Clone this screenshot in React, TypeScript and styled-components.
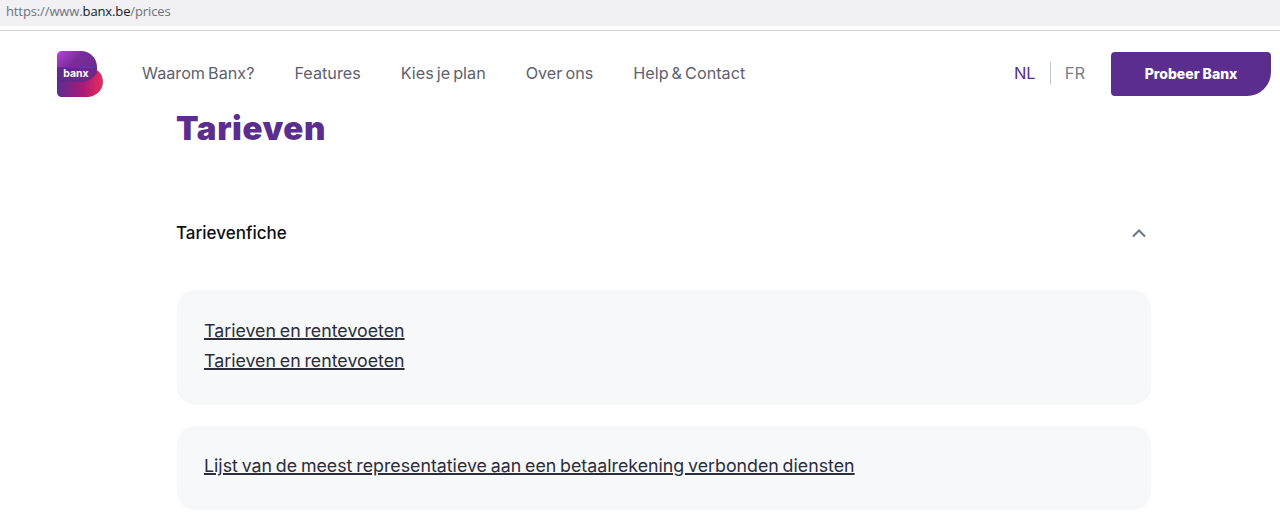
import React from 'react'
import styled, { createGlobalStyle } from 'styled-components'

const GlobalStyle = createGlobalStyle`
  html, body {
    margin: 0;
    padding: 0;
    background: #fff;
    overflow: hidden;
    font-family: "Inter", "Liberation Sans", sans-serif;
  }
`

const navItems = ['Waarom Banx?', 'Features', 'Kies je plan', 'Over ons', 'Help & Contact']

const Logo: React.FC = () => (
  <LogoSvg width="46" height="46" viewBox="0 0 46 46">
    <defs>
      <linearGradient id="logoBase" x1="0" y1="0" x2="1" y2="0.75">
        <stop offset="0" stopColor="#b245d8" />
        <stop offset="0.45" stopColor="#7a2c9a" />
        <stop offset="1" stopColor="#6a2a8e" />
      </linearGradient>
      <linearGradient id="logoLow" x1="0" y1="0" x2="1" y2="0">
        <stop offset="0" stopColor="#5a2d90" />
        <stop offset="0.55" stopColor="#a81a78" />
        <stop offset="1" stopColor="#e92c5e" />
      </linearGradient>
    </defs>
    <path d="M5 0H24C33 0 40 7 40 16V30H0V5C0 2 2 0 5 0Z" fill="url(#logoBase)" />
    <path d="M0 16H30C39 16 46 22 46 31C46 39 39 46 30 46H5C2 46 0 44 0 41Z" fill="url(#logoLow)" />
    <path d="M9 17H38C40 18 40 20 40 22C36 28 30 31 26 31H8C3 31 0 28 0 24C0 20 4 17 9 17Z" fill="#5f2a88" opacity="0.85" />
    <LogoText x="19" y="26">banx</LogoText>
  </LogoSvg>
)

const App: React.FC = () => (
  <>
    <GlobalStyle />
    <AddressBar>
      https://www.<strong>banx.be</strong>/prices
    </AddressBar>
    <Header>
      <Logo />
      <Nav>
        {navItems.map((item) => (
          <NavLink key={item}>{item}</NavLink>
        ))}
      </Nav>
      <Lang>
        <LangItem $active>NL</LangItem>
        <LangDivider />
        <LangItem>FR</LangItem>
      </Lang>
      <CtaButton>Probeer Banx</CtaButton>
    </Header>
    <Main>
      <Title>Tarieven</Title>
      <SectionHead>
        <SectionTitle>Tarievenfiche</SectionTitle>
        <svg width="16" height="10" viewBox="0 0 16 10" fill="none">
          <path d="M2 8.5L8 2.5L14 8.5" stroke="#6b7488" strokeWidth="2" />
        </svg>
      </SectionHead>
      <Card>
        <DocLink>Tarieven en rentevoeten</DocLink>
        <DocLink>Tarieven en rentevoeten</DocLink>
      </Card>
      <CardSingle>
        <DocLink>Lijst van de meest representatieve aan een betaalrekening verbonden diensten</DocLink>
      </CardSingle>
    </Main>
  </>
)

const AddressBar = styled.div`
  height: 26px;
  padding-left: 6px;
  background: #f0f0f5;
  color: #6f7378;
  font-family: "Open Sans", sans-serif;
  font-size: 13px;
  letter-spacing: -0.12px;
  line-height: 22px;
  margin-bottom: 4px;
  strong {
    font-weight: 400;
    color: #16202c;
  }
`

const Header = styled.header`
  display: flex;
  align-items: center;
  height: 84px;
  padding: 0 9px 0 57px;
  border-top: 1px solid #d4d4d4;
  box-sizing: border-box;
`

const LogoSvg = styled.svg`
  flex: none;
  margin-top: 3px;
`

const LogoText = styled.text`
  fill: #fff;
  font-family: "Inter", sans-serif;
  font-size: 10.5px;
  font-weight: 700;
  text-anchor: middle;
`

const Nav = styled.nav`
  display: flex;
  gap: 40px;
  margin-left: 39px;
  flex: 1;
`

const NavLink = styled.a`
  color: #5d5f70;
  font-size: 16.2px;
  word-spacing: -1.5px;
`

const Lang = styled.div`
  display: flex;
  align-items: center;
  gap: 14px;
  margin-right: 26px;
`

const LangItem = styled.span<{ $active?: boolean }>`
  color: ${(p) => (p.$active ? '#5b2d90' : '#7c7f85')};
  font-size: 16.5px;
`

const LangDivider = styled.span`
  width: 1px;
  height: 22px;
  background: #c0c4cc;
`

const CtaButton = styled.button`
  width: 160px;
  height: 44px;
  margin-top: 2px;
  border: none;
  border-radius: 4px 4px 24px 4px;
  background: #5b2d8e;
  color: #fff;
  font-family: "Inter", sans-serif;
  font-size: 14px;
  font-weight: 800;
`

const Main = styled.main`
  width: 974px;
  margin-left: 177px;
`

const Title = styled.h1`
  margin: -4px 0 0 -1px;
  color: #5b2d8e;
  font-size: 33px;
  font-weight: 900;
  letter-spacing: 0.6px;
  line-height: 36px;
`

const SectionHead = styled.div`
  display: flex;
  align-items: center;
  justify-content: space-between;
  margin-top: 75px;
  padding-right: 4px;
  height: 24px;
`

const SectionTitle = styled.div`
  color: #0e0e14;
  font-size: 17px;
  font-weight: 500;
  margin-left: -1px;
`

const Card = styled.div`
  display: flex;
  flex-direction: column;
  gap: 6px;
  margin-top: 45px;
  padding: 29px 27px 0;
  height: 115px;
  box-sizing: border-box;
  background: #f7f8fa;
  border-radius: 18px;
`

const CardSingle = styled(Card)`
  height: 84px;
  margin-top: 21px;
  padding-top: 28px;
`

const DocLink = styled.a`
  color: #2b2d3a;
  font-size: 17.8px;
  word-spacing: -1.2px;
  line-height: 24px;
  text-decoration: underline;
  text-decoration-thickness: 1.5px;
`

export default App
